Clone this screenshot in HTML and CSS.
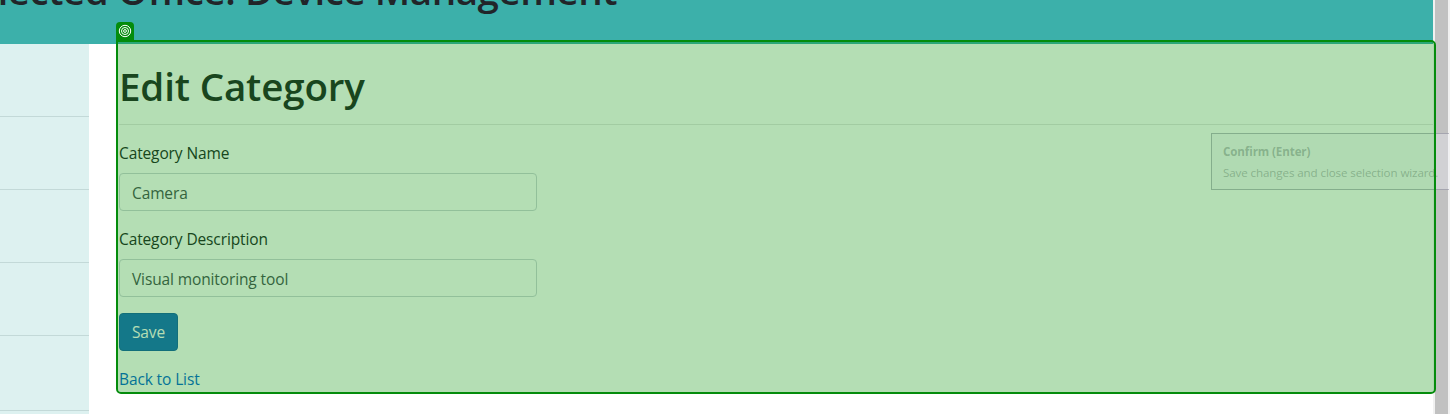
FILE: index.html
```
<!DOCTYPE html>
<html lang="en">
<head>
<meta charset="utf-8">
<title>Edit Category</title>
<link rel="stylesheet" href="styles.css">
</head>
<body>
<div class="page">
  <header class="banner"><div class="banner-title">Connected Office: Device Management</div></header>
  <div class="layout">
    <nav class="sidebar">
      <div class="nav-item"></div>
      <div class="nav-item"></div>
      <div class="nav-item"></div>
      <div class="nav-item"></div>
      <div class="nav-item last"></div>
    </nav>
    <main class="content">
      <h1 class="title">Edit Category</h1>
      <hr class="rule">
      <form class="form">
        <label class="label">Category Name</label>
        <div class="input">Camera</div>
        <label class="label">Category Description</label>
        <div class="input">Visual monitoring tool</div>
        <button class="save" type="button">Save</button>
      </form>
      <a class="back">Back to List</a>
    </main>
  </div>
</div>
<div class="scrollbar"></div>
<aside class="tooltip">
  <div class="tip-title">Confirm (Enter)</div>
  <div class="tip-text">Save changes and close selection wizard.</div>
</aside>
<div class="selection"></div>
<div class="badge">
  <svg width="14" height="14" viewBox="0 0 14 14" fill="none" stroke="#fff"><circle cx="7" cy="7" r="5.7"/><circle cx="7" cy="7" r="3.5"/><circle cx="7" cy="7" r="1.4"/></svg>
</div>
</body>
</html>
```
FILE: styles.css
```
* { box-sizing: border-box; }
body {
  margin: 0;
  width: 1450px;
  height: 414px;
  display: flex;
  overflow: hidden;
  position: relative;
  background: #fff;
  color: #212529;
  font: 400 15.5px/24px "Open Sans", "Noto Sans", sans-serif;
  letter-spacing: -.12px;
}
.page { width: 1433px; height: 414px; }
.banner { height: 44px; background: #3cb0aa; overflow: hidden; }
.banner-title {
  width: 617px;
  height: 48px;
  margin-top: -34px;
  display: flex;
  justify-content: flex-end;
  white-space: nowrap;
  font-size: 38.5px;
  line-height: 48px;
  font-weight: 600;
  letter-spacing: -.45px;
}
.layout { display: flex; height: 370px; }
.sidebar { width: 89px; background: #ddf1f0; }
.nav-item { height: 73px; border-bottom: 1px solid #c3d9d8; }
.nav-item.last { height: 75px; }
.content { width: 1344px; padding: 18px 0 0 30px; }
.title {
  margin: 0;
  font-size: 38.5px;
  line-height: 48px;
  font-weight: 600;
  letter-spacing: -.15px;
  white-space: nowrap;
}
.rule { height: 1px; margin: 14px 0 16px; border: 0; background: rgba(0, 0, 0, .1); }
.form { display: flex; flex-direction: column; align-items: flex-start; }
.label { height: 24px; margin-bottom: 8px; white-space: nowrap; }
.input {
  width: 418px;
  height: 38px;
  margin-bottom: 16px;
  padding: 7px 12px 5px;
  border: 1px solid #ced4da;
  border-radius: 4px;
  color: #495057;
}
.save {
  width: 59px;
  height: 38px;
  padding: 0;
  border: 1px solid #1861ac;
  border-radius: 4px;
  background: #1b6ec2;
  color: #fff;
  font: inherit;
  letter-spacing: inherit;
}
.back { display: block; margin-top: 16px; color: #0366d6; }
.scrollbar {
  width: 17px;
  height: 414px;
  background: #c1c1c1;
  border: solid #f1f1f1;
  border-width: 0 2px;
}
.tooltip {
  position: absolute;
  left: 1211px;
  top: 133px;
  width: 238px;
  height: 57px;
  padding: 7px 0 0 11px;
  border: 1px solid rgba(110, 110, 130, .45);
  border-right: 0;
  background: rgba(240, 240, 250, .35);
  color: rgba(100, 100, 110, .4);
  font-size: 11.6px;
  line-height: 21px;
  letter-spacing: -.11px;
  white-space: nowrap;
}
.tip-title { font-weight: 700; }
.selection {
  position: absolute;
  left: 116px;
  top: 40px;
  width: 1320px;
  height: 354px;
  border: 2px solid #048c0c;
  border-radius: 0 5px 5px 5px;
  background: rgba(5, 145, 8, .3);
  background-clip: padding-box;
}
.badge {
  position: absolute;
  left: 116px;
  top: 22px;
  width: 18px;
  height: 19px;
  padding: 2px;
  border-radius: 4px 4px 0 0;
  background: #048c0c;
}
.badge svg { display: block; }
```
